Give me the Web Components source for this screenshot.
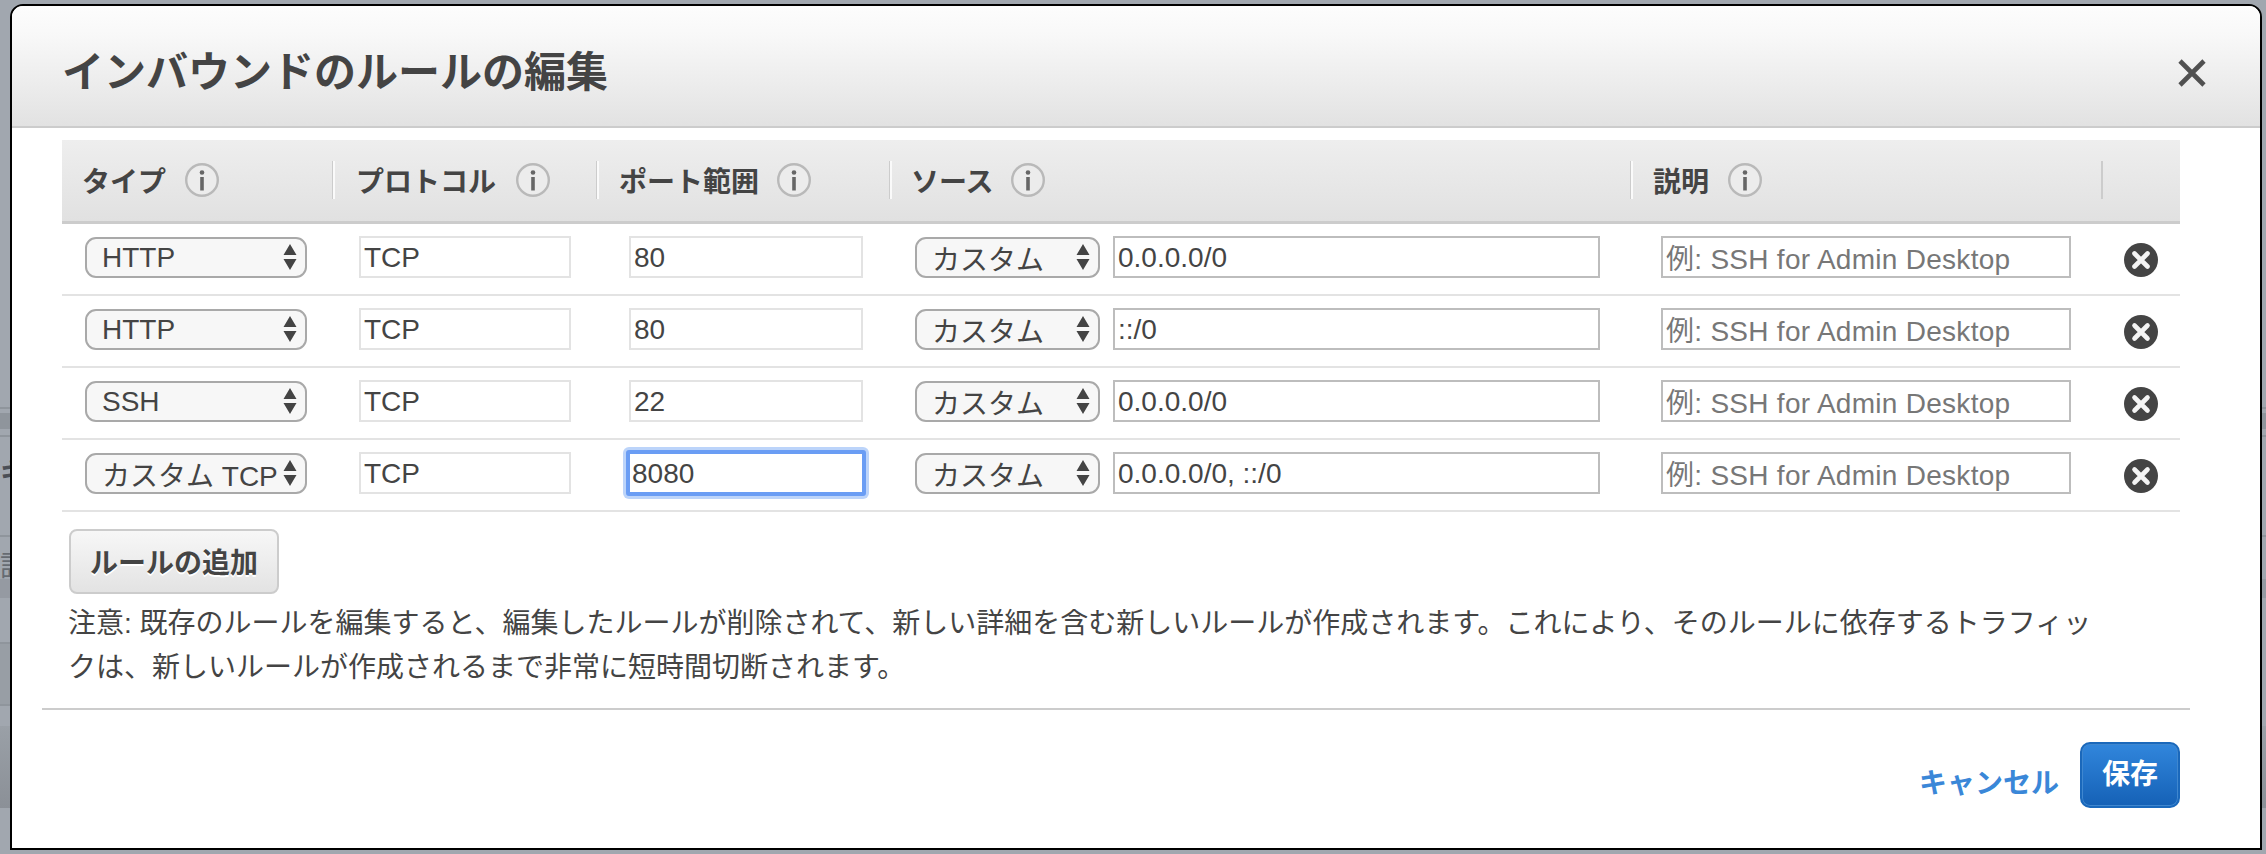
<!DOCTYPE html>
<html lang="ja">
<head>
<meta charset="utf-8">
<title>インバウンドのルールの編集</title>
<style>
  html, body { margin: 0; padding: 0; background: #a1a7af; }
  body { width: 2266px; height: 854px; overflow: hidden; font-family: "Liberation Sans", "Noto Sans CJK JP", sans-serif; color: #444; }
</style>
</head>
<body>

<page-backdrop>
  <edit-modal>
    <span slot="title">インバウンドのルールの編集</span>

    <rule-head></rule-head>
    <rule-row type="HTTP" port="80" cidr="0.0.0.0/0"></rule-row>
    <rule-row type="HTTP" port="80" cidr="::/0"></rule-row>
    <rule-row type="SSH" port="22" cidr="0.0.0.0/0"></rule-row>
    <rule-row type="カスタム TCP" port="8080" cidr="0.0.0.0/0, ::/0" focused></rule-row>

    <add-button>ルールの追加</add-button>
    <modal-note>注意: 既存のルールを編集すると、編集したルールが削除されて、新しい詳細を含む新しいルールが作成されます。これにより、そのルールに依存するトラフィッ<br>クは、新しいルールが作成されるまで非常に短時間切断されます。</modal-note>

    <cancel-link slot="footer">キャンセル</cancel-link>
    <save-button slot="footer">保存</save-button>
  </edit-modal>
</page-backdrop>

<script>
//shared column widths for the table head and its rows
const RULE_COLUMNS = "272px 264px 292px 741px 470px 79px";

//the greyed out page behind the dialog
class PageBackdrop extends HTMLElement {
    constructor(){
        super();
        this.attachShadow({mode:"open"}).innerHTML = `
        <style>
            :host { display: block; position: relative; width: 2266px; height: 854px; overflow: hidden; background: #a1a7af; }
            .under { display: flex; flex-direction: column; height: 854px; color: #4b4f56; font-size: 28px; }
            .gap-1 { height: 417px; }
            .line { height: 2px; background: #8f959c; }
            .gap-2 { height: 4px; }
            .band-1 { height: 17px; background: #8f959c; }
            .gap-3 { height: 6px; }
            .sliver-a { height: 100px; box-sizing: border-box; padding-top: 23px; font-weight: bold; line-height: 28px; overflow: hidden; }
            .sliver-b { height: 42px; box-sizing: border-box; padding-top: 16px; line-height: 28px; color: #666b72; overflow: hidden; }
            .band-2 { height: 20px; background: #959aa2; }
            .gap-4 { height: 45px; }
            .box { height: 65px; width: 60px; margin-left: -10px; box-sizing: border-box; border: 2px solid #8f959c; border-radius: 10px; background: #989ea5; }
            .gap-5 { height: 21px; }
            .band-3 { height: 84px; background: linear-gradient(#9aa0a7, #8b9097); }
            .last { flex: 1; display: grid; grid-template-columns: 539px 545px 532px 1fr; padding: 18px 0 0 17px; line-height: 28px; font-weight: bold; }
        </style>
        <div class="under">
            <div class="gap-1"></div>
            <div class="line"></div>
            <div class="gap-2"></div>
            <div class="band-1"></div>
            <div class="gap-3"></div>
            <div class="line"></div>
            <div class="sliver-a"><span>キ</span></div>
            <div class="line"></div>
            <div class="sliver-b"><span>説</span></div>
            <div class="band-2"></div>
            <div class="gap-4"></div>
            <div class="box"></div>
            <div class="gap-5"></div>
            <div class="band-3"></div>
            <div class="last"><span>HTTP</span><span>TCP</span><span>80</span><span>0.0.0.0/0</span></div>
        </div>
        <slot></slot>`;
    }
}

//dialog frame with title bar, body and footer
class EditModal extends HTMLElement {
    constructor(){
        super();
        this.attachShadow({mode:"open"}).innerHTML = `
        <style>
            :host { display: flex; flex-direction: column; position: absolute; left: 10px; top: 4px; width: 2252px; height: 846px; box-sizing: border-box; border: 2px solid #000; border-radius: 13px 13px 0 0; background: #fff; overflow: hidden; }
            header { display: flex; align-items: center; justify-content: space-between; height: 120px; box-sizing: border-box; padding: 13px 54px 0 50px; border-bottom: 2px solid #ccc; background: linear-gradient(#fdfdfd, #f8f8f8 25%, #e2e2e2); flex: none; box-sizing: content-box; height: 107px; }
            .title { font-size: 42px; font-weight: bold; color: #444; line-height: 50px; }
            main { padding: 12px 80px 0 50px; flex: none; height: 580px; box-sizing: border-box; }
            hr { margin: 0 70px 0 30px; height: 2px; border: 0; background: #ccc; flex: none; }
            footer { display: flex; justify-content: flex-end; padding: 32px 80px 0 0; }
            svg { display: block; }
        </style>
        <header>
            <div class="title"><slot name="title"></slot></div>
            <svg width="28" height="28" viewBox="0 0 28 28"><path d="M2 2 L26 26 M26 2 L2 26" stroke="#505050" stroke-width="4.6" fill="none"/></svg>
        </header>
        <main><slot></slot></main>
        <hr>
        <footer><slot name="footer"></slot></footer>`;
    }
}

//round "i" help icon of the head cells
class InfoIcon extends HTMLElement {
    constructor(){
        super();
        this.attachShadow({mode:"open"}).innerHTML = `
        <style>
            :host { display: block; width: 34px; height: 34px; flex: none; }
            svg { display: block; }
        </style>
        <svg width="34" height="34" viewBox="0 0 34 34">
            <circle cx="17" cy="17" r="15.8" fill="#ececec" stroke="#b9b9b9" stroke-width="2.4"/>
            <circle cx="17" cy="9.5" r="2.3" fill="#666"/>
            <rect x="15.2" y="14" width="3.6" height="13.5" fill="#666"/>
        </svg>`;
    }
}

class HeadCell extends HTMLElement {
    constructor(){
        super();
        this.attachShadow({mode:"open"}).innerHTML = `
        <style>
            :host { display: flex; align-items: center; height: 100%; font-size: 28px; font-weight: bold; color: #444; }
            .sep { width: 3px; height: 38px; flex: none; margin-right: var(--pad, 22px); background: var(--sep, linear-gradient(90deg, #ccc 0, #ccc 25%, #fafafa 25%)); }
            :host([nosep]) .sep { background: none; }
            info-icon { margin-left: var(--icon-gap, 19px); }
        </style>
        <span class="sep"></span><slot></slot><info-icon></info-icon>`;
    }
}

class RuleHead extends HTMLElement {
    constructor(){
        super();
        this.attachShadow({mode:"open"}).innerHTML = `
        <style>
            :host { display: grid; grid-template-columns: ${RULE_COLUMNS}; height: 84px; box-sizing: border-box; padding-bottom: 2px; border-bottom: 3px solid #ccc; background: linear-gradient(#eeeeee, #e1e1e1); align-items: center; }
            .tail { height: 38px; width: 2px; background: #ccc; }
            .c1 { --pad: 17px; }
            .c2 { margin-left: -2px; --pad: 21px; --icon-gap: 20px; }
            .c3 { margin-left: -2px; --pad: 20px; --icon-gap: 18px; }
            .c4 { margin-left: -1px; --pad: 19px; --icon-gap: 17px; }
            .c5 { margin-left: -1px; --pad: 20px; --icon-gap: 19px; }
        </style>
        <head-cell class="c1" nosep>タイプ</head-cell>
        <head-cell class="c2">プロトコル</head-cell>
        <head-cell class="c3">ポート範囲</head-cell>
        <head-cell class="c4">ソース</head-cell>
        <head-cell class="c5">説明</head-cell>
        <div class="tail"></div>`;
    }
}

//select look-alike: rounded box, label and the two stacked arrows
class RuleSelect extends HTMLElement {
    constructor(){
        super();
        this.attachShadow({mode:"open"}).innerHTML = `
        <style>
            :host { display: flex; align-items: center; justify-content: space-between; height: 41px; box-sizing: border-box; border: 2px solid #a9a9a9; border-radius: 11px; background: #f7f7f7; font-size: 28px; color: #444; padding: 1px 8px 0 15px; white-space: nowrap; overflow: hidden; }
            svg { display: block; flex: none; margin-top: -1px; }
        </style>
        <slot></slot>
        <svg width="14" height="26" viewBox="0 0 14 26"><path d="M7 0 L13.5 11 H0.5 Z M0.5 15 H13.5 L7 26 Z" fill="#444"/></svg>`;
    }
}

//text box, grey border variants come from attributes
class RuleInput extends HTMLElement {
    constructor(){
        super();
        this.attachShadow({mode:"open"}).innerHTML = `
        <style>
            :host { display: flex; align-items: center; height: 42px; box-sizing: border-box; border: 2px solid #bdbdbd; background: #fff; font-size: 28px; color: #444; padding: 2px 3px 0; white-space: nowrap; overflow: hidden; }
            :host([light]) { border-color: #e3e3e3; }
            :host([hint]) { color: #777; letter-spacing: 0.28px; padding-top: 0; }
            :host([focused]) { height: 46px; margin: 0 -3px; padding: 2px 2px 0; border: 4px solid #6a9df4; border-radius: 3px; box-shadow: 0 0 0 3px #bcd4fa; overflow: visible; }
        </style>
        <slot></slot>`;
    }
}

class DeleteIcon extends HTMLElement {
    constructor(){
        super();
        this.attachShadow({mode:"open"}).innerHTML = `
        <style>
            :host { display: block; width: 34px; height: 34px; }
            svg { display: block; }
        </style>
        <svg width="34" height="34" viewBox="0 0 34 34">
            <circle cx="17" cy="17" r="17" fill="#444"/>
            <path d="M10.5 10.5 L23.5 23.5 M23.5 10.5 L10.5 23.5" stroke="#f4f4f4" stroke-width="4.6" stroke-linecap="round" fill="none"/>
        </svg>`;
    }
}

class RuleRow extends HTMLElement {
    constructor(){
        super();
        this.attachShadow({mode:"open"});
    }

    connectedCallback(){
        const focused = this.hasAttribute("focused") ? "focused" : "light";
        this.shadowRoot.innerHTML = `
        <style>
            :host { display: grid; grid-template-columns: ${RULE_COLUMNS}; height: 72px; box-sizing: border-box; border-bottom: 2px solid #e3e3e3; align-items: center; padding-bottom: 4px; }
            .c1 { padding: 0 27px 0 23px; }
            .c2 { padding: 0 27px 0 25px; }
            .c3 { padding: 0 27px 0 31px; }
            .c4 { display: grid; grid-template-columns: 185px 487px; column-gap: 13px; align-items: center; padding-left: 25px; }
            .c5 { padding: 0 30px 0 30px; }
            .c6 { padding: 5px 0 0 23px; }
        </style>
        <div class="c1"><rule-select>${this.getAttribute("type")}</rule-select></div>
        <div class="c2"><rule-input light>TCP</rule-input></div>
        <div class="c3"><rule-input ${focused}>${this.getAttribute("port")}</rule-input></div>
        <div class="c4"><rule-select>カスタム</rule-select><rule-input>${this.getAttribute("cidr")}</rule-input></div>
        <div class="c5"><rule-input hint>例: SSH for Admin Desktop</rule-input></div>
        <div class="c6"><delete-icon></delete-icon></div>`;
    }
}

class AddButton extends HTMLElement {
    constructor(){
        super();
        this.attachShadow({mode:"open"}).innerHTML = `
        <style>
            :host { display: flex; align-items: center; justify-content: center; width: 210px; height: 65px; margin: 17px 0 0 7px; padding-bottom: 2px; box-sizing: border-box; border: 2px solid #ccc; border-radius: 8px; background: linear-gradient(#f7f7f7, #e3e3e3); font-size: 28px; font-weight: bold; color: #444; text-shadow: 0 2px 0 #fff; }
        </style>
        <slot></slot>`;
    }
}

class ModalNote extends HTMLElement {
    constructor(){
        super();
        this.attachShadow({mode:"open"}).innerHTML = `
        <style>
            :host { display: block; margin: 8px 0 0 6px; font-size: 28px; line-height: 44px; color: #444; white-space: nowrap; }
        </style>
        <slot></slot>`;
    }
}

class CancelLink extends HTMLElement {
    constructor(){
        super();
        this.attachShadow({mode:"open"}).innerHTML = `
        <style>
            :host { display: block; margin: 21px 21px 0 0; font-size: 28px; line-height: 42px; font-weight: bold; color: #3a87d8; }
        </style>
        <slot></slot>`;
    }
}

class SaveButton extends HTMLElement {
    constructor(){
        super();
        this.attachShadow({mode:"open"}).innerHTML = `
        <style>
            :host { display: flex; justify-content: center; padding-top: 12px; width: 100px; height: 66px; box-sizing: border-box; border: 2px solid #1a68bb; border-radius: 10px; background: linear-gradient(#3186dc, #1561b6); box-shadow: inset 0 0 0 1px #3f87cf; font-size: 28px; line-height: 38px; font-weight: bold; color: #fff; }
        </style>
        <slot></slot>`;
    }
}

customElements.define("page-backdrop", PageBackdrop);
customElements.define("edit-modal", EditModal);
customElements.define("info-icon", InfoIcon);
customElements.define("head-cell", HeadCell);
customElements.define("rule-head", RuleHead);
customElements.define("rule-select", RuleSelect);
customElements.define("rule-input", RuleInput);
customElements.define("delete-icon", DeleteIcon);
customElements.define("rule-row", RuleRow);
customElements.define("add-button", AddButton);
customElements.define("modal-note", ModalNote);
customElements.define("cancel-link", CancelLink);
customElements.define("save-button", SaveButton);
</script>
</body>
</html>
